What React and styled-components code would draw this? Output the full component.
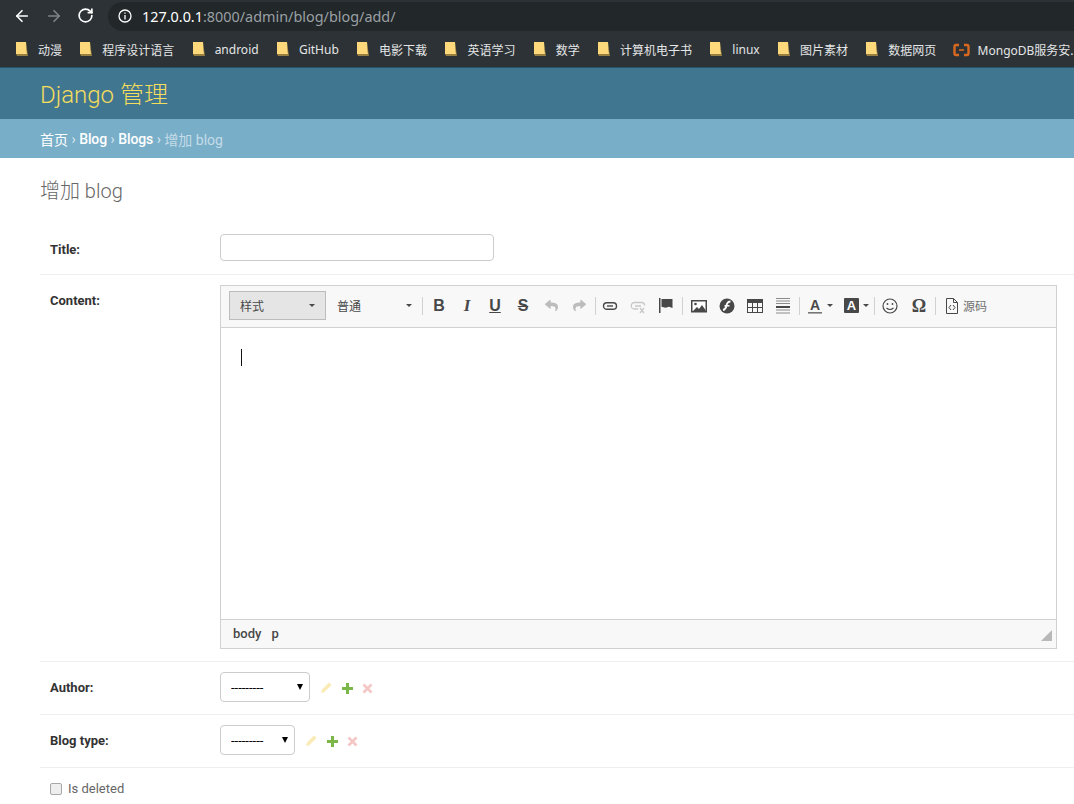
import React from "react";
import styled, { createGlobalStyle } from "styled-components";
import { ArrowLeft, ArrowRight, RotateCw } from "lucide-react";
import { FaReply, FaShare } from "react-icons/fa";

const Global = createGlobalStyle`
  html, body { margin: 0; padding: 0; background: #fff; overflow: hidden; }
  body { font-family: Roboto, "Noto Sans CJK SC", sans-serif; font-size: 14px; color: #333; }
`;

const Page = styled.div`
  width: 1074px;
  height: 804px;
  overflow: hidden;
`;

/* browser chrome */
const AddressRow = styled.div`
  height: 32px;
  background: #2d3236;
  display: flex;
  align-items: center;
  padding-left: 13px;
  box-sizing: border-box;
`;

const NavIcon = styled.div`
  width: 18px;
  height: 18px;
  margin-right: 14px;
  display: flex;
  color: ${(p) => (p.$off ? "#7f8487" : "#fff")};
`;

const UrlPill = styled.div`
  flex: 1;
  height: 29px;
  margin-left: -1px;
  background: #22272a;
  border-radius: 15px 0 0 15px;
  display: flex;
  align-items: center;
  padding-left: 10px;
  font-family: "Noto Sans", "Noto Sans CJK SC", sans-serif;
  font-size: 14.4px;
  color: #9aa0a4;
`;

const Host = styled.span`
  color: #fff;
  margin-left: 10px;
`;

const BookmarkBar = styled.div`
  height: 35px;
  background: #2d3236;
  border-bottom: 1px solid #255568;
  display: flex;
  align-items: center;
  padding-left: 16px;
  gap: 18.3px;
  white-space: nowrap;
  overflow: hidden;
`;

const Bookmark = styled.div`
  display: flex;
  align-items: center;
  gap: ${(p) => p.$gap || 10}px;
  margin-left: ${(p) => p.$ml || 0}px;
  font-family: "Noto Sans", "Noto Sans CJK SC", sans-serif;
  font-size: 12px;
  color: #e4e6e7;
`;

/* django header */
const Header = styled.div`
  height: 51px;
  box-sizing: border-box;
  background: #417690;
  display: flex;
  align-items: center;
  padding: 0 40px 2px;
`;

const Brand = styled.div`
  font-size: 24px;
  font-weight: 300;
  color: #f5dd5d;
`;

const Crumbs = styled.div`
  height: 39px;
  background: #79aec8;
  display: flex;
  align-items: center;
  padding: 0 40px;
  color: #d8e8f0;
  font-size: 14px;
  white-space: pre;
`;

const Crumb = styled.span`
  color: #fff;
  font-weight: ${(p) => p.$w || 400};
  letter-spacing: ${(p) => (p.$w ? "-0.1px" : "0")};
`;

const Current = styled.span`
  color: #c4dce8;
`;

const Content = styled.div`
  padding: 20px 0 0 40px;
`;

const Title = styled.h1`
  margin: 0 0 20px;
  font-size: 20px;
  line-height: 26px;
  font-weight: 300;
  color: #666;
`;

const Row = styled.div`
  display: flex;
  padding: 10px 10px ${(p) => p.$pb || 12}px;
  border-bottom: 1px solid #eee;
`;

const Label = styled.label`
  width: 170px;
  height: 27px;
  flex: none;
  font-size: 13px;
  font-weight: 700;
  color: #333;
  line-height: 32px;
`;

const TextInput = styled.input`
  width: 274px;
  height: 27px;
  box-sizing: border-box;
  border: 1px solid #ccc;
  border-radius: 4px;
  background: #fff;
  padding: 5px 6px;
`;

const FieldLine = styled.div`
  display: flex;
  align-items: center;
`;

const SelectWrap = styled.div`
  position: relative;
  width: ${(p) => p.$w}px;
  height: 30px;

  &::after {
    content: "";
    position: absolute;
    right: 7px;
    top: 12px;
    border-left: 3.5px solid transparent;
    border-right: 3.5px solid transparent;
    border-top: 6px solid #000;
    pointer-events: none;
  }
`;

const Select = styled.select`
  appearance: none;
  width: 100%;
  height: 100%;
  box-sizing: border-box;
  border: 1px solid #ccc;
  border-radius: 4px;
  background: #fff;
  padding: 0 10px;
  font-family: Roboto, sans-serif;
  font-size: 13px;
  color: #000;
`;

const RelatedIcons = styled.div`
  display: flex;
  align-items: center;
  gap: 9.5px;
  margin: 2px 0 0 10px;
`;

const CheckRow = styled.div`
  display: flex;
  align-items: center;
  gap: 6px;
  padding: 13px 10px;
  font-size: 13px;
  color: #666;
`;

const Check = styled.input`
  appearance: none;
  margin: 0;
  width: 12px;
  height: 12px;
  box-sizing: border-box;
  background: #eee;
  border: 1px solid #a8a8a8;
  border-radius: 2px;
`;

/* rich text editor */
const Editor = styled.div`
  width: 837px;
  height: 364px;
  box-sizing: border-box;
  border: 1px solid #d1d1d1;
  display: flex;
  flex-direction: column;
`;

const Toolbar = styled.div`
  height: 42px;
  flex: none;
  box-sizing: border-box;
  background: #f8f8f8;
  border-bottom: 1px solid #d1d1d1;
  display: flex;
  align-items: center;
  padding: 0 0 2px 8px;
`;

const Combo = styled.div`
  width: ${(p) => p.$w}px;
  height: 29px;
  box-sizing: border-box;
  display: flex;
  align-items: center;
  justify-content: space-between;
  padding: 0 ${(p) => p.$pr || 10}px 0 10px;
  font-size: 12px;
  color: #484848;
  background: ${(p) => (p.$on ? "#e5e5e5" : "transparent")};
  border: 1px solid ${(p) => (p.$on ? "#bcbcbc" : "transparent")};
`;

const Caret = styled.span`
  width: 0;
  height: 0;
  flex: none;
  border-left: 3px solid transparent;
  border-right: 3px solid transparent;
  border-top: 3px solid #484848;
  margin-left: ${(p) => p.$ml || 0}px;
`;

const Sep = styled.span`
  width: 1px;
  height: 18px;
  flex: none;
  background: #d1d1d1;
  margin: 0 ${(p) => (p.$tight ? 0 : 2)}px 0 2px;
`;

const Btn = styled.div`
  width: ${(p) => p.$w || 28}px;
  height: 28px;
  flex: none;
  display: flex;
  align-items: center;
  justify-content: center;
  color: ${(p) => (p.$off ? "#bcbcbc" : "#484848")};
  font-size: 12px;
`;

const Glyph = styled.span`
  font-family: ${(p) => (p.$serif ? '"Liberation Serif"' : '"Liberation Sans"')}, sans-serif;
  font-size: ${(p) => p.$size || 16}px;
  font-weight: 700;
  font-style: ${(p) => (p.$italic ? "italic" : "normal")};
  text-decoration: ${(p) => p.$deco || "none"};
  color: #484848;
  line-height: 1;
`;

const SourceText = styled.span`
  margin-left: 4px;
  color: #707070;
`;

const EditArea = styled.div`
  flex: 1;
  background: #fff;
  padding: 21px 20px;
`;

const TextCaret = styled.div`
  width: 1px;
  height: 17px;
  background: #111;
`;

const StatusBar = styled.div`
  height: 29px;
  flex: none;
  box-sizing: border-box;
  background: #f8f8f8;
  border-top: 1px solid #d1d1d1;
  display: flex;
  align-items: center;
  justify-content: space-between;
  padding: 0 4px 0 12px;
`;

const Path = styled.div`
  display: flex;
  gap: 10px;
  margin-bottom: 2px;
  font-size: 13px;
  font-weight: 500;
  color: #484848;
`;

const GripSlot = styled.div`
  display: flex;
  margin-top: 3px;
`;

const Folder = () => (
  <svg width="12" height="15" viewBox="0 0 12 15">
    <path d="M0 0h10l1 12H0z" fill="#fdd97c" />
    <path d="M10 0l2 14H1l-1-2h11z" fill="#b99a45" opacity=".75" />
  </svg>
);

const CloudIcon = () => (
  <svg width="17" height="14" viewBox="0 0 17 14" fill="none" stroke="#d9691f" strokeWidth="2.4">
    <path d="M6 2H3Q1.500 2 1.500 4v6Q1.500 12 3 12h3M11 2h3q1.500 0 1.500 2v6q0 2-1.500 2h-3" />
    <path d="M6 7h5" strokeWidth="1.600" />
  </svg>
);

const LinkIcon = () => (
  <svg width="16" height="16" viewBox="0 0 16 16" fill="none" stroke="#484848" strokeWidth="1.400">
    <rect x="1.500" y="4.700" width="13" height="6.600" rx="3.300" />
    <path d="M5 8h6" />
  </svg>
);

const UnlinkIcon = () => (
  <svg width="16" height="16" viewBox="0 0 16 16" fill="none" stroke="#c8c8c8" strokeWidth="1.300">
    <path d="M8 11H4.500a3.200 3.200 0 0 1 0-6.500h7a3.200 3.200 0 0 1 3.200 3" />
    <path d="M5 8h6M10 10l4 5M14 10l-4 5" />
  </svg>
);

const FlagIcon = () => (
  <svg width="14" height="16" viewBox="0 0 14 16" fill="#484848">
    <rect x="0" y="0" width="1.500" height="15" />
    <path d="M2.500 1h11v9l-3.500-1.200-3.500 1-4-1z" />
  </svg>
);

const ImageIcon = () => (
  <svg width="16" height="16" viewBox="0 0 16 16">
    <rect x=".75" y="2.750" width="14.500" height="11" fill="#fff" stroke="#484848" strokeWidth="1.500" />
    <circle cx="4.500" cy="6" r="1.300" fill="#484848" />
    <path d="M2 13l4-4 2 2 3-4 3.500 5v1z" fill="#484848" />
  </svg>
);

const FlashIcon = () => (
  <svg width="16" height="16" viewBox="0 0 16 16">
    <circle cx="8" cy="8" r="7.500" fill="#484848" />
    <path d="M11.500 3.500C8.500 3.500 8 5 7.500 7.500S6.500 11.500 4 12" fill="none" stroke="#fff" strokeWidth="1.800" />
    <path d="M5.500 7.800h5" stroke="#fff" strokeWidth="1.500" />
  </svg>
);

const TableIcon = () => (
  <svg width="16" height="14" viewBox="0 0 16 14" fill="none" stroke="#484848">
    <rect x=".5" y="1" width="15" height="12.500" />
    <rect x="0" y="0" width="16" height="4" fill="#484848" stroke="none" />
    <path d="M5.500 4v9M10.500 4v9M1 8.500h14" />
  </svg>
);

const HrIcon = () => (
  <svg width="14" height="16" viewBox="0 0 14 16" stroke="#8a8a8a">
    <path d="M0 .5h14M0 3h14M0 5.500h14M0 12h14M0 15h14" />
    <rect x="0" y="8" width="14" height="2" fill="#484848" stroke="none" />
  </svg>
);

const ColorAIcon = () => (
  <svg width="16" height="16" viewBox="0 0 16 16">
    <text x="8" y="12" textAnchor="middle" fontFamily="Liberation Sans" fontWeight="700" fontSize="14" fill="#484848">A</text>
    <rect x="1" y="14" width="14" height="1.600" fill="#777" />
  </svg>
);

const BgAIcon = () => (
  <svg width="15" height="15" viewBox="0 0 15 15">
    <rect width="15" height="15" rx="1" fill="#484848" />
    <text x="7.500" y="12" textAnchor="middle" fontFamily="Liberation Sans" fontWeight="700" fontSize="13" fill="#fff">A</text>
  </svg>
);

const SmileIcon = () => (
  <svg width="16" height="16" viewBox="0 0 16 16" fill="none" stroke="#484848" strokeWidth="1.200">
    <circle cx="8" cy="8" r="7" />
    <circle cx="5.500" cy="6" r=".9" fill="#484848" stroke="none" />
    <circle cx="10.500" cy="6" r=".9" fill="#484848" stroke="none" />
    <path d="M4.500 10q3.500 3 7 0" />
  </svg>
);

const SourceIcon = () => (
  <svg width="14" height="16" viewBox="0 0 14 16" fill="none" stroke="#484848">
    <path d="M1.500 .5h7l4 4v11h-11zM8.500 .5v4h4" />
    <path d="M6 7L4 9.500 6 12M8 7l2 2.500L8 12" />
  </svg>
);

const ResizeGrip = () => (
  <svg width="11" height="11" viewBox="0 0 11 11">
    <path d="M11 0v11H0z" fill="#b8b8b8" />
  </svg>
);

const InfoIcon = () => (
  <svg width="14" height="14" viewBox="0 0 14 14" fill="none" stroke="#fff" strokeWidth="1.300">
    <circle cx="7" cy="7" r="6" />
    <path d="M7 6v4.500M7 3.500v1.300" />
  </svg>
);

const Pencil = () => (
  <svg width="12" height="12" viewBox="0 0 12 12">
    <path d="M9 .5l2.500 2.500-7 7L1 11l1-3.500z" fill="#efb80b" opacity=".3" />
  </svg>
);

const Plus = () => (
  <svg width="11" height="11" viewBox="0 0 11 11">
    <path d="M4 0h3v4h4v3H7v4H4V7H0V4h4z" fill="#7ab648" />
  </svg>
);

const Cross = () => (
  <svg width="11" height="11" viewBox="0 0 11 11">
    <path d="M1.500 1.500l8 8M9.500 1.500l-8 8" stroke="#dd4646" strokeWidth="2.600" opacity=".3" />
  </svg>
);

const bookmarks = [
  "动漫", "程序设计语言", "android", "GitHub", "电影下载", "英语学习",
  "数学", "计算机电子书", "linux", "图片素材", "数据网页",
];

const Related = () => (
  <RelatedIcons>
    <Pencil />
    <Plus />
    <Cross />
  </RelatedIcons>
);

export default function App() {
  return (
    <Page>
      <Global />
      <AddressRow>
        <NavIcon><ArrowLeft size={18} strokeWidth={2.2} /></NavIcon>
        <NavIcon $off><ArrowRight size={18} strokeWidth={2.2} /></NavIcon>
        <NavIcon><RotateCw size={17} strokeWidth={2.4} /></NavIcon>
        <UrlPill>
          <InfoIcon />
          <Host>127.0.0.1</Host>:8000/admin/blog/blog/add/
        </UrlPill>
      </AddressRow>
      <BookmarkBar>
        {bookmarks.map((name) => (
          <Bookmark key={name}><Folder />{name}</Bookmark>
        ))}
        <Bookmark $gap={8} $ml={-2}><CloudIcon />MongoDB服务安...</Bookmark>
      </BookmarkBar>

      <Header><Brand>Django 管理</Brand></Header>
      <Crumbs>
        <Crumb>首页</Crumb> › <Crumb $w={500}>Blog</Crumb> › <Crumb $w={500}>Blogs</Crumb> › <Current>增加 blog</Current>
      </Crumbs>

      <Content>
        <Title>增加 blog</Title>
        <Row $pb={13}>
          <Label>Title:</Label>
          <TextInput type="text" />
        </Row>
        <Row>
          <Label>Content:</Label>
          <Editor>
            <Toolbar>
              <Combo $w={97} $on>样式<Caret /></Combo>
              <Combo $w={94} $pr={7}>普通<Caret /></Combo>
              <Sep />
              <Btn><Glyph>B</Glyph></Btn>
              <Btn><Glyph $serif $italic $size={17}>I</Glyph></Btn>
              <Btn><Glyph $deco="underline">U</Glyph></Btn>
              <Btn><Glyph $deco="line-through">S</Glyph></Btn>
              <Btn $off><FaReply size={13} /></Btn>
              <Btn $off><FaShare size={13} /></Btn>
              <Sep $tight />
              <Btn><LinkIcon /></Btn>
              <Btn><UnlinkIcon /></Btn>
              <Btn><FlagIcon /></Btn>
              <Sep />
              <Btn><ImageIcon /></Btn>
              <Btn><FlashIcon /></Btn>
              <Btn><TableIcon /></Btn>
              <Btn><HrIcon /></Btn>
              <Sep $tight />
              <Btn $w={40}><ColorAIcon /><Caret $ml={4} /></Btn>
              <Btn $w={32}><BgAIcon /><Caret $ml={4} /></Btn>
              <Sep $tight />
              <Btn $w={30}><SmileIcon /></Btn>
              <Btn><Glyph $serif $size={18}>Ω</Glyph></Btn>
              <Sep />
              <Btn $w={56}><SourceIcon /><SourceText>源码</SourceText></Btn>
            </Toolbar>
            <EditArea><TextCaret /></EditArea>
            <StatusBar>
              <Path><span>body</span><span>p</span></Path>
              <GripSlot><ResizeGrip /></GripSlot>
            </StatusBar>
          </Editor>
        </Row>
        <Row>
          <Label>Author:</Label>
          <FieldLine>
            <SelectWrap $w={90}><Select><option>---------</option></Select></SelectWrap>
            <Related />
          </FieldLine>
        </Row>
        <Row>
          <Label>Blog type:</Label>
          <FieldLine>
            <SelectWrap $w={75}><Select><option>---------</option></Select></SelectWrap>
            <Related />
          </FieldLine>
        </Row>
        <CheckRow>
          <Check type="checkbox" />
          Is deleted
        </CheckRow>
      </Content>
    </Page>
  );
}
